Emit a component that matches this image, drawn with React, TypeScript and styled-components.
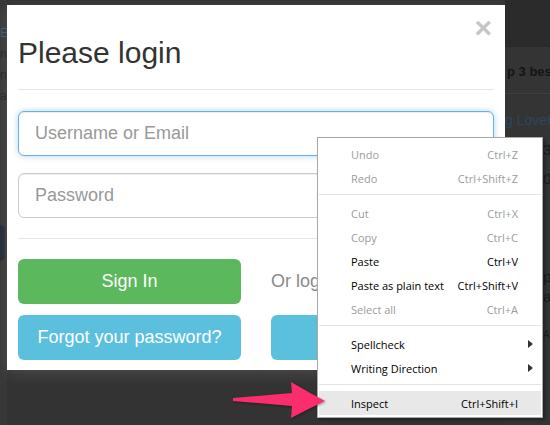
import React from "react";
import styled, { createGlobalStyle } from "styled-components";

const Global = createGlobalStyle`
  html, body { margin: 0; padding: 0; background: #333; }
  body { width: 550px; height: 425px; overflow: hidden; }
  * { box-sizing: border-box; }
`;

const Stage = styled.div`
  position: relative;
  width: 550px;
  height: 425px;
  overflow: hidden;
  display: flex;
  align-items: flex-start;
  background: #333;
  font-family: "Liberation Sans", Arial, sans-serif;
`;

const LeftStrip = styled.div`
  width: 7px;
  flex-shrink: 0;
  height: 425px;
  overflow: hidden;
  background: #383838;
  padding-top: 23px;
  display: flex;
  flex-direction: column;
  font-size: 12px;
  line-height: 21px;
  color: #222;
`;

const StripLetter = styled.span<{ $tone?: string }>`
  color: ${(p) => p.$tone || "#242424"};
  white-space: nowrap;
`;

const Blob = styled.div`
  margin-top: 118px;
  width: 5px;
  height: 36px;
  border-radius: 0 6px 6px 0;
  background: #232b35;
`;

const RightStrip = styled.div`
  flex: 1;
  height: 425px;
  overflow: hidden;
  display: flex;
  flex-direction: column;
  background: #343434;
  white-space: nowrap;
`;

const StripTop = styled.div`
  height: 47px;
  background: #2b2b2b;
`;

const StripHeading = styled.div`
  padding: 15px 0 11px 2px;
  font-size: 13px;
  font-weight: bold;
  line-height: 20px;
  color: #141414;
  border-bottom: 1px solid #3f3f3f;
`;

const StripLine = styled.div<{ $color?: string; $mt: number; $size?: number; $indent?: number }>`
  margin-top: ${(p) => p.$mt}px;
  padding-left: ${(p) => p.$indent || 0}px;
  font-size: ${(p) => p.$size || 15}px;
  line-height: 18px;
  color: ${(p) => p.$color || "#1c1c1c"};
`;

const Modal = styled.div`
  width: 498px;
  flex-shrink: 0;
  margin-top: 5px;
  height: 365px;
  background: #fff;
  padding: 0 11px 10px;
  box-shadow: 0 3px 14px rgba(255, 255, 255, 0.12);
  display: flex;
  flex-direction: column;
`;

const Header = styled.div`
  display: flex;
  align-items: flex-start;
  justify-content: space-between;
  padding-top: 13px;
  padding-bottom: 20px;
  border-bottom: 1px solid #e5e5e5;
`;

const Title = styled.h1`
  margin: 18px 0 0;
  font-size: 30px;
  font-weight: normal;
  line-height: 33px;
  color: #333;
`;

const Close = styled.span`
  font-size: 30px;
  font-weight: bold;
  line-height: 20px;
  color: #c6c6c6;
  margin-right: 2px;
`;

const Body = styled.div`
  display: flex;
  flex-direction: column;
  gap: 17px;
  padding: 21px 0 20px;
  border-bottom: 1px solid #e5e5e5;
`;

const Input = styled.input<{ $focus?: boolean }>`
  width: 100%;
  height: 45px;
  padding: 0 16px;
  font-family: "Liberation Sans", Arial, sans-serif;
  font-size: 18px;
  color: #555;
  border-radius: 6px;
  border: 1px solid ${(p) => (p.$focus ? "#66afe9" : "#ccc")};
  box-shadow: ${(p) =>
    p.$focus
      ? "inset 0 1px 1px rgba(0,0,0,.075), 0 0 6px rgba(102,175,233,.5)"
      : "inset 0 1px 1px rgba(0,0,0,.075)"};
  outline: none;
  &::placeholder { color: #999; }
`;

const Footer = styled.div`
  display: grid;
  grid-template-columns: 1fr 1fr;
  column-gap: 30px;
  row-gap: 11px;
  padding-top: 20px;
`;

const Button = styled.button<{ $variant: "success" | "info" }>`
  height: 45px;
  border: none;
  border-radius: 6px;
  font-family: "Liberation Sans", Arial, sans-serif;
  font-size: 18px;
  color: #fff;
  background: ${(p) => (p.$variant === "success" ? "#5cb85c" : "#5bc0de")};
  padding: 0;
`;

const OrText = styled.div`
  height: 45px;
  display: flex;
  align-items: center;
  font-size: 18px;
  color: #8a8a8a;
  white-space: nowrap;
`;

const Menu = styled.div`
  position: absolute;
  left: 317px;
  top: 137px;
  width: 226px;
  padding: 4px 1px 2px;
  background: #fff;
  border: 1px solid #a9a9a9;
  box-shadow: 2px 2px 3px rgba(0, 0, 0, 0.35);
  font-family: "Open Sans", "Noto Sans", sans-serif;
  font-size: 11px;
`;

const Item = styled.div<{ $disabled?: boolean; $active?: boolean }>`
  height: 24px;
  display: grid;
  grid-template-columns: 1fr auto 23px;
  align-items: center;
  padding-left: 32px;
  color: ${(p) => (p.$disabled ? "#9c9c9c" : "#000")};
  background: ${(p) => (p.$active ? "#e8e8e8" : "transparent")};
  white-space: nowrap;
`;

const Shortcut = styled.span`
  text-align: right;
`;

const SubArrow = styled.span`
  justify-self: center;
  width: 0;
  height: 0;
  margin-left: 2px;
  border-top: 4px solid transparent;
  border-bottom: 4px solid transparent;
  border-left: 5px solid #333;
`;

const Separator = styled.div`
  height: 1px;
  margin: 4px 0 6px;
  background: #e3e3e3;
`;

const Arrow = styled.svg`
  position: absolute;
  left: 228px;
  top: 376px;
  filter: drop-shadow(1px 1px 1px rgba(0, 0, 0, 0.35));
`;

type MI = { label: string; shortcut?: string; disabled?: boolean; sub?: boolean; active?: boolean };

const groups: MI[][] = [
  [
    { label: "Undo", shortcut: "Ctrl+Z", disabled: true },
    { label: "Redo", shortcut: "Ctrl+Shift+Z", disabled: true },
  ],
  [
    { label: "Cut", shortcut: "Ctrl+X", disabled: true },
    { label: "Copy", shortcut: "Ctrl+C", disabled: true },
    { label: "Paste", shortcut: "Ctrl+V" },
    { label: "Paste as plain text", shortcut: "Ctrl+Shift+V" },
    { label: "Select all", shortcut: "Ctrl+A", disabled: true },
  ],
  [
    { label: "Spellcheck", sub: true },
    { label: "Writing Direction", sub: true },
  ],
  [{ label: "Inspect", shortcut: "Ctrl+Shift+I", active: true }],
];

export default function App() {
  return (
    <>
      <Global />
      <Stage>
        <LeftStrip>
          <StripLetter $tone="#3d5670">E</StripLetter>
          <StripLetter>n</StripLetter>
          <StripLetter>n</StripLetter>
          <StripLetter>a</StripLetter>
          <Blob />
        </LeftStrip>
        <Modal>
          <Header>
            <Title>Please login</Title>
            <Close>×</Close>
          </Header>
          <Body>
            <Input $focus placeholder="Username or Email" />
            <Input type="password" placeholder="Password" />
          </Body>
          <Footer>
            <Button $variant="success">Sign In</Button>
            <OrText>Or login with</OrText>
            <Button $variant="info">Forgot your password?</Button>
            <Button $variant="info">Facebook</Button>
          </Footer>
        </Modal>
        <RightStrip>
          <StripTop />
          <StripHeading>p 3 bes</StripHeading>
          <StripLine $mt={17} $color="#2e4660" $size={14}>g LoveH</StripLine>
          <StripLine $mt={12} $indent={38}>3</StripLine>
          <StripLine $mt={11} $indent={38}>0</StripLine>
          <StripLine $mt={80} $indent={38}>p</StripLine>
          <StripLine $mt={2} $indent={38}>a</StripLine>
          <StripLine $mt={20} $size={10} $indent={38} $color="#1e1e1e">AY</StripLine>
        </RightStrip>
        <Menu>
          {groups.map((g, gi) => (
            <React.Fragment key={gi}>
              {gi > 0 && <Separator />}
              {g.map((it) => (
                <Item key={it.label} $disabled={it.disabled} $active={it.active}>
                  <span>{it.label}</span>
                  <Shortcut>{it.shortcut || ""}</Shortcut>
                  {it.sub ? <SubArrow /> : <span />}
                </Item>
              ))}
            </React.Fragment>
          ))}
        </Menu>
        <Arrow width="100" height="46" viewBox="0 0 100 46">
          <path
            d="M5 22 L64 17 L63 6 Q80 16 97 25 Q80 33 63 42 L64 30 L5 25 Z"
            fill="#fb2d6d"
          />
        </Arrow>
      </Stage>
    </>
  );
}
